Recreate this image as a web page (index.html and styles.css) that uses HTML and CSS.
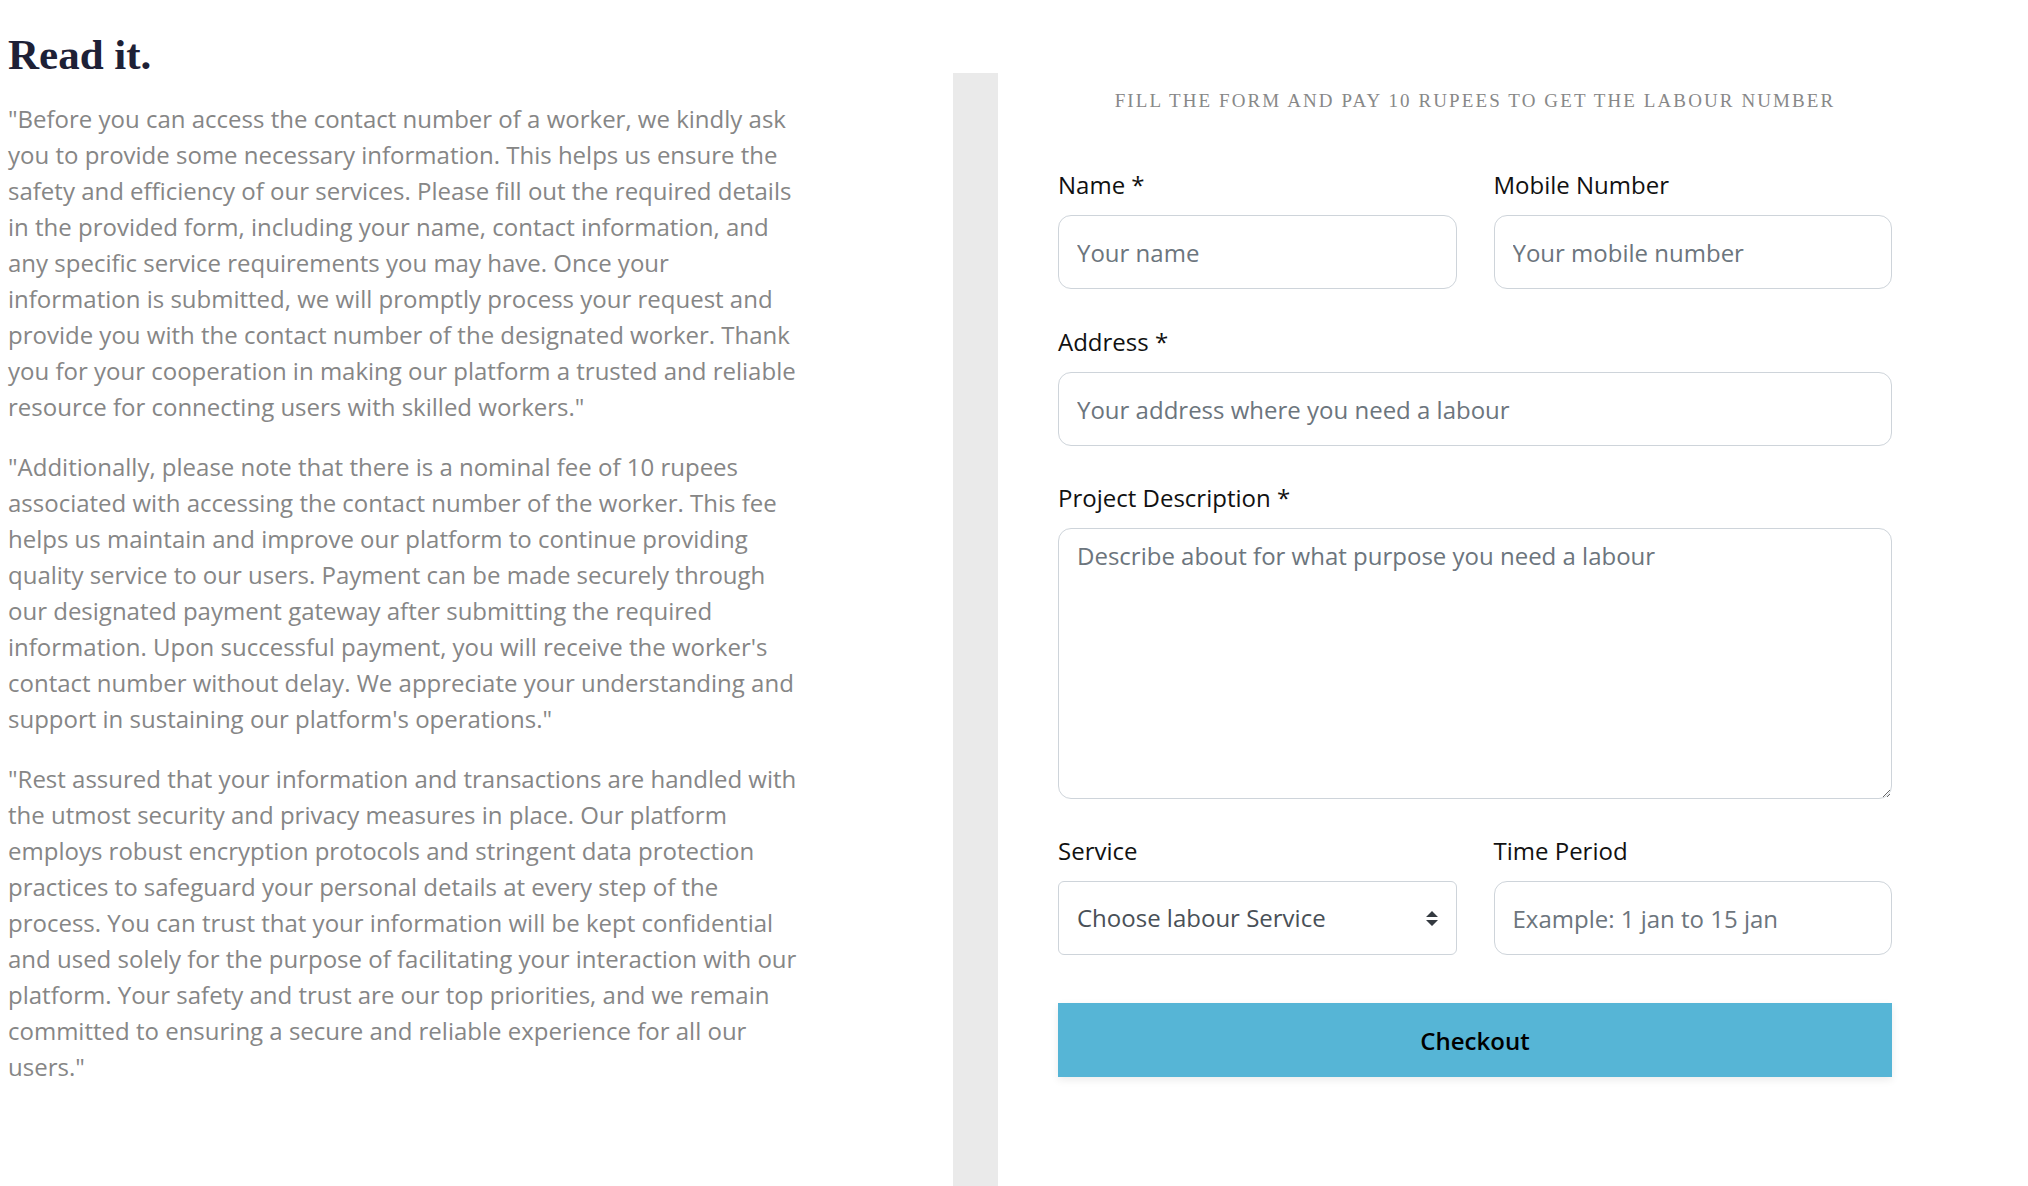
FILE: index.html
```html
<!DOCTYPE html>
<html lang="en">
<head>
<meta charset="utf-8">
<title>Read it.</title>
<link rel="stylesheet" href="styles.css">
</head>
<body>
<div class="page">
  <section class="info">
    <h1 class="info-title">Read it.</h1>
    <p class="info-text">"Before you can access the contact number of a worker, we kindly ask you to provide some necessary information. This helps us ensure the safety and efficiency of our services. Please fill out the required details in the provided form, including your name, contact information, and any specific service requirements you may have. Once your information is submitted, we will promptly process your request and provide you with the contact number of the designated worker. Thank you for your cooperation in making our platform a trusted and reliable resource for connecting users with skilled workers."</p>
    <p class="info-text">"Additionally, please note that there is a nominal fee of 10 rupees associated with accessing the contact number of the worker. This fee helps us maintain and improve our platform to continue providing quality service to our users. Payment can be made securely through our designated payment gateway after submitting the required information. Upon successful payment, you will receive the worker's contact number without delay. We appreciate your understanding and support in sustaining our platform's operations."</p>
    <p class="info-text">"Rest assured that your information and transactions are handled with the utmost security and privacy measures in place. Our platform employs robust encryption protocols and stringent data protection practices to safeguard your personal details at every step of the process. You can trust that your information will be kept confidential and used solely for the purpose of facilitating your interaction with our platform. Your safety and trust are our top priorities, and we remain committed to ensuring a secure and reliable experience for all our users."</p>
  </section>

  <div class="band"></div>

  <section class="order">
    <h2 class="order-title">Fill the form and pay 10 rupees to get the labour number</h2>
    <form class="order-form">
      <div class="row row-first">
        <div class="field">
          <label class="field-label" for="name">Name *</label>
          <input class="field-input" id="name" type="text" placeholder="Your name">
        </div>
        <div class="field">
          <label class="field-label" for="mobile">Mobile Number</label>
          <input class="field-input" id="mobile" type="text" placeholder="Your mobile number">
        </div>
      </div>
      <div class="field">
        <label class="field-label" for="address">Address *</label>
        <input class="field-input" id="address" type="text" placeholder="Your address where you need a labour">
      </div>
      <div class="field">
        <label class="field-label" for="desc">Project Description *</label>
        <textarea class="field-area" id="desc" placeholder="Describe about for what purpose you need a labour"></textarea>
      </div>
      <div class="row">
        <div class="field">
          <label class="field-label" for="service">Service</label>
          <div class="select-wrap">
            <select class="field-select" id="service">
              <option>Choose labour Service</option>
            </select>
            <svg class="select-arrows" width="12" height="15" viewBox="0 0 4 5" aria-hidden="true"><path d="M2 0L0 2h4zm0 5L0 3h4z" fill="#343a40"/></svg>
          </div>
        </div>
        <div class="field">
          <label class="field-label" for="period">Time Period</label>
          <input class="field-input" id="period" type="text" placeholder="Example: 1 jan to 15 jan">
        </div>
      </div>
      <button class="checkout" type="button">Checkout</button>
    </form>
  </section>
</div>
</body>
</html>
```

FILE: styles.css
```css
* { box-sizing: border-box; }

html, body {
  margin: 0;
  padding: 0;
  background: #ffffff;
}

body {
  font-family: "Open Sans", "Liberation Sans", sans-serif;
  font-size: 24px;
  line-height: 36px;
  color: #212529;
}

.page {
  display: flex;
  align-items: flex-start;
  min-height: 1186px;
  padding-left: 8px;
}

.info {
  width: 794px;
  flex: none;
}

.info-title {
  margin: 30px 0 21px;
  font-family: "Liberation Serif", "Times New Roman", serif;
  font-weight: 700;
  font-size: 43px;
  line-height: 50px;
  color: #1e2136;
}

.info-text {
  margin: 0 0 24px;
  color: #868686;
}

.band {
  flex: none;
  width: 45px;
  margin-left: 151px;
  margin-top: 73px;
  align-self: stretch;
  background: #eaeaea;
}

.order {
  flex: none;
  width: 834px;
  margin-left: 60px;
  margin-top: 73px;
}

.order-title {
  margin: 14px 0 52px;
  text-align: center;
  font-family: "Liberation Serif", "Times New Roman", serif;
  font-weight: 400;
  font-size: 19px;
  line-height: 28px;
  letter-spacing: 2.1px;
  text-transform: uppercase;
  color: #888888;
}

.order-form {
  display: flex;
  flex-direction: column;
}

.row {
  display: grid;
  grid-template-columns: 1fr 1fr;
  column-gap: 37px;
}

.field {
  display: flex;
  flex-direction: column;
  margin-bottom: 34px;
}

.row-first .field {
  margin-bottom: 35px;
}

.field-label {
  margin-bottom: 12px;
  color: #111111;
}

.field-input,
.field-area,
.field-select {
  width: 100%;
  font-family: "Open Sans", "Liberation Sans", sans-serif;
  font-size: 24px;
  line-height: 36px;
  color: #495057;
  background: #ffffff;
  border: 1px solid #ced4da;
  outline: none;
}

.field-input {
  height: 74px;
  padding: 0 18px;
  border-radius: 13px;
}

.field-area {
  height: 271px;
  padding: 9px 18px;
  border-radius: 13px;
  resize: vertical;
}

.field-input::placeholder,
.field-area::placeholder {
  color: #6c757d;
  opacity: 1;
}

.select-wrap {
  position: relative;
}

.field-select {
  height: 74px;
  padding: 0 40px 0 18px;
  border-radius: 6px;
  appearance: none;
  -webkit-appearance: none;
  color: #495057;
}

.select-arrows {
  position: absolute;
  right: 19px;
  top: 30px;
  pointer-events: none;
}

.checkout {
  margin-top: 14px;
  height: 74px;
  width: 100%;
  border: none;
  border-radius: 0;
  background: #56b5d6;
  box-shadow: 0 3px 8px rgba(0, 0, 0, 0.08);
  font-family: "Open Sans", "Liberation Sans", sans-serif;
  font-size: 24px;
  font-weight: 600;
  color: #000000;
  cursor: pointer;
}
```
